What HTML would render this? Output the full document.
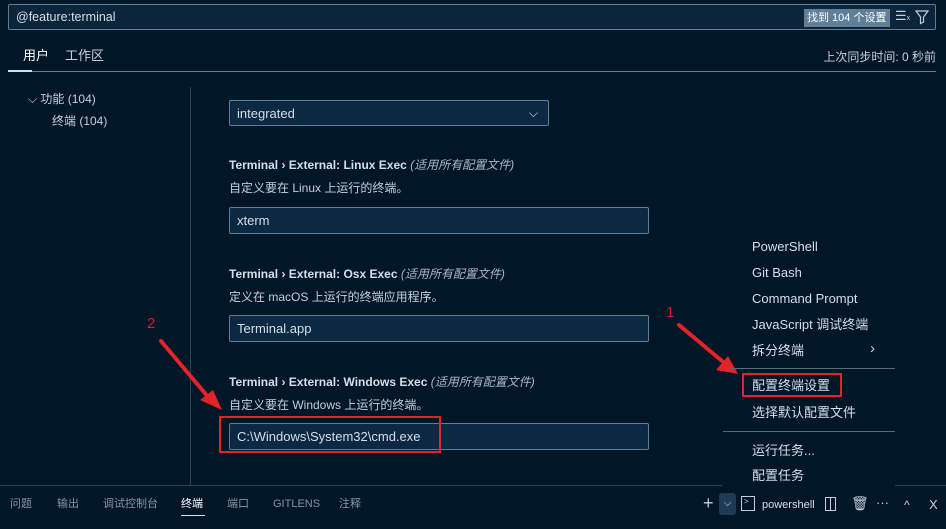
<!DOCTYPE html>
<html><head><meta charset="utf-8"><style>
*{margin:0;padding:0;box-sizing:border-box}
body{width:946px;height:529px;background:#011627;font-family:"Liberation Sans","Noto Sans CJK SC",sans-serif;color:#d6deeb;font-size:13px;position:relative;overflow:hidden}
.a{position:absolute;white-space:nowrap;line-height:16px}
.inp{position:absolute;background:#0b2942;border:1px solid #5f7e97;border-radius:2px;padding-left:7px;line-height:25px;font-size:13px;color:#d6deeb}
.t{font-size:12px;color:#c5cfdb}
.t b{color:#d6deeb}
.t i{color:#a9b6c4}
.d{font-size:12px;color:#c5cfdb}
.m{position:absolute;left:752px;font-size:13px;color:#d6deeb;line-height:16px;white-space:nowrap}
.bt{position:absolute;top:497px;font-size:11px;color:#8196a8;line-height:14px}
</style></head><body>
<div class="inp" style="left:8px;top:4px;width:928px;height:26px;line-height:24px;font-size:12.5px;background:#0b253a">@feature:terminal</div>
<div class="a" style="left:804px;top:9px;height:18px;width:86px;background:#5f7e97;color:#fff;font-size:11px;line-height:18px;padding-left:3px">找到 104 个设置</div>
<div class="a" style="left:895px;top:8px;font-size:13px;color:#c5cfdb">☰<span style="font-size:7px">x</span></div>
<svg class="a" style="left:914px;top:9px" width="16" height="16" viewBox="0 0 16 16"><path d="M2 2h12l-4.5 6v5l-3 1.5V8z" fill="none" stroke="#c5cfdb" stroke-width="1.2"/></svg>
<div class="a" style="left:23px;top:48px;font-size:13px;color:#fff">用户</div>
<div class="a" style="left:65px;top:48px;font-size:13px;color:#c5cfdb">工作区</div>
<div class="a" style="left:8px;top:70px;width:24px;height:2px;background:#d6deeb"></div>
<div class="a" style="left:32px;top:71px;width:904px;height:1px;background:#5f7e97"></div>
<div class="a" style="right:10px;top:49px;font-size:12px;color:#c5cfdb">上次同步时间: 0 秒前</div>
<div class="a" style="left:28px;top:91px;font-size:12px;color:#c5cfdb">⌵ 功能 (104)</div>
<div class="a" style="left:52px;top:113px;font-size:12px;color:#c5cfdb">终端 (104)</div>
<div class="a" style="left:190px;top:87px;width:1px;height:398px;background:#2a4258"></div>
<div class="inp" style="left:229px;top:100px;width:320px;height:26px">integrated<span style="position:absolute;right:10px;top:0;font-size:12px">⌵</span></div>
<div class="a t" style="left:229px;top:157px"><b>Terminal › External: Linux Exec</b> <i>(适用所有配置文件)</i></div>
<div class="a d" style="left:229px;top:180px">自定义要在 Linux 上运行的终端。</div>
<div class="inp" style="left:229px;top:207px;width:420px;height:27px">xterm</div>
<div class="a t" style="left:229px;top:266px"><b>Terminal › External: Osx Exec</b> <i>(适用所有配置文件)</i></div>
<div class="a d" style="left:229px;top:289px">定义在 macOS 上运行的终端应用程序。</div>
<div class="inp" style="left:229px;top:315px;width:420px;height:27px">Terminal.app</div>
<div class="a t" style="left:229px;top:374px"><b>Terminal › External: Windows Exec</b> <i>(适用所有配置文件)</i></div>
<div class="a d" style="left:229px;top:397px">自定义要在 Windows 上运行的终端。</div>
<div class="inp" style="left:229px;top:423px;width:420px;height:27px">C:\Windows\System32\cmd.exe</div>
<div class="a" style="left:219px;top:416px;width:222px;height:37px;border:2px solid #e0242a"></div>
<div class="a" style="left:147px;top:316px;color:#d0202a;font-size:15px">2</div>
<div class="a" style="left:666px;top:305px;color:#d0202a;font-size:15px">1</div>
<div class="a" style="left:722px;top:230px;width:173px;height:255px;background:#011627"></div>
<svg class="a" style="left:0;top:0" width="946" height="529"><g stroke="#e0242a" stroke-width="4" stroke-linecap="round"><line x1="161" y1="341" x2="214" y2="404"/><line x1="679" y1="325" x2="728" y2="366"/></g><polygon points="222,410 200,400 213,390" fill="#e0242a"/><polygon points="738,374 716,370 728,356" fill="#e0242a"/></svg>
<div class="m" style="top:239px">PowerShell</div>
<div class="m" style="top:265px">Git Bash</div>
<div class="m" style="top:291px">Command Prompt</div>
<div class="m" style="top:317px">JavaScript 调试终端</div>
<div class="m" style="top:343px">拆分终端</div>
<div class="a" style="left:870px;top:341px;font-size:15px;color:#c5cfdb">›</div>
<div class="a" style="left:731px;top:368px;width:164px;height:1px;background:#5a6a78"></div>
<div class="m" style="top:378px">配置终端设置</div>
<div class="a" style="left:742px;top:373px;width:100px;height:24px;border:2px solid #e0242a"></div>
<div class="m" style="top:405px">选择默认配置文件</div>
<div class="a" style="left:723px;top:431px;width:172px;height:1px;background:#5a6a78"></div>
<div class="m" style="top:443px">运行任务...</div>
<div class="m" style="top:468px">配置任务</div>
<div class="a" style="left:0;top:485px;width:722px;height:1px;background:#2a4258"></div>
<div class="a" style="left:895px;top:485px;width:51px;height:1px;background:#2a4258"></div>
<div class="bt" style="left:10px">问题</div>
<div class="bt" style="left:57px">输出</div>
<div class="bt" style="left:103px">调试控制台</div>
<div class="bt" style="left:181px;color:#fff">终端</div>
<div class="a" style="left:181px;top:515px;width:24px;height:1px;background:#d6deeb"></div>
<div class="bt" style="left:227px">端口</div>
<div class="bt" style="left:273px">GITLENS</div>
<div class="bt" style="left:339px">注释</div>
<div class="a" style="left:703px;top:495px;font-size:18px;color:#c5cfdb">+</div>
<div class="a" style="left:719px;top:493px;width:17px;height:22px;background:#1d3b53;border-radius:3px;color:#c5cfdb;font-size:10px;text-align:center;line-height:22px">⌵</div>
<div class="a" style="left:741px;top:496px;width:14px;height:15px;border:1px solid #c5cfdb;font-size:8px;color:#c5cfdb;padding-left:2px;line-height:10px">&gt;</div>
<div class="a" style="left:762px;top:497px;font-size:11px;color:#d6deeb">powershell</div>
<div class="a" style="left:825px;top:497px;width:11px;height:14px;border:1px solid #c5cfdb"><div style="margin-left:4px;width:1px;height:12px;background:#c5cfdb"></div></div>
<div class="a" style="left:851px;top:495px;font-size:14px;color:#c5cfdb">🗑</div>
<div class="a" style="left:876px;top:495px;color:#c5cfdb">···</div>
<div class="a" style="left:904px;top:497px;color:#c5cfdb;font-size:12px">^</div>
<div class="a" style="left:929px;top:497px;color:#c5cfdb;font-size:13px">X</div>
</body></html>
